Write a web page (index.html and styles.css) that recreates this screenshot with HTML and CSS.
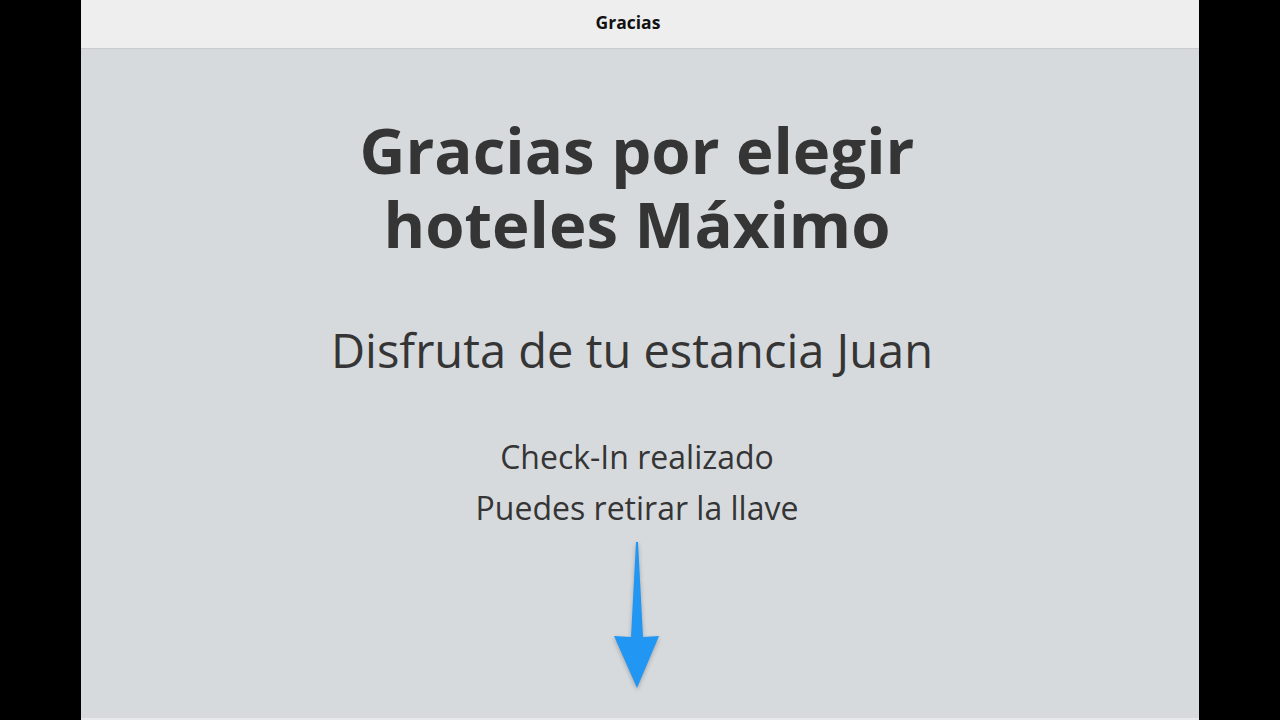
FILE: index.html
```html
<!DOCTYPE html>
<html lang="es">
<head>
<meta charset="utf-8">
<title>Gracias</title>
<link rel="stylesheet" href="styles.css">
</head>
<body>
<div class="screen">
  <header class="topbar">Gracias</header>
  <main class="content">
    <h1 class="title"><span class="title-line">Gracias por elegir</span><span class="title-line">hoteles Máximo</span></h1>
    <p class="subtitle">Disfruta de tu estancia Juan</p>
    <div class="status">
      <p>Check-In realizado</p>
      <p>Puedes retirar la llave</p>
    </div>
    <svg class="arrow" width="48" height="152" viewBox="0 0 48 152" aria-hidden="true">
      <polygon points="23,4 25,4 30,99 46,98 24,150 1,98 18,99" fill="#2196f3"/>
    </svg>
  </main>
</div>
</body>
</html>
```

FILE: styles.css
```css
html, body {
  margin: 0;
  padding: 0;
  background: #000;
  height: 100%;
}
body {
  font-family: "Open Sans", "Noto Sans", sans-serif;
  color: #353535;
}
.screen {
  width: 1118px;
  height: 720px;
  margin: 0 auto;
  display: flex;
  flex-direction: column;
  background: #d7dadd;
  overflow: hidden;
}
.topbar {
  height: 49px;
  box-sizing: border-box;
  flex: none;
  background: #eeeeee;
  border-bottom: 1px solid #c9cbcd;
  display: flex;
  align-items: center;
  justify-content: center;
  padding-right: 24px;
  padding-bottom: 4px;
  font-weight: 700;
  font-size: 17.5px;
  color: #111;
}
.content {
  flex: 1;
  display: flex;
  flex-direction: column;
  align-items: center;
  padding-top: 64px;
  padding-right: 6px;
  border-bottom: 2px solid #e6e8ea;
}
.title {
  margin: 0;
  font-size: 63.5px;
  line-height: 74px;
  font-weight: 700;
  text-align: center;
  display: flex;
  flex-direction: column;
  align-items: center;
}
.title-line {
  display: block;
  height: 74px;
}
.subtitle {
  margin: 59px 10px 0 0;
  font-size: 47px;
  line-height: 60px;
}
.status {
  margin-top: 51px;
  text-align: center;
  font-size: 32px;
  line-height: 51px;
}
.status p {
  margin: 0;
}
.arrow {
  margin-top: 5px;
  filter: drop-shadow(0 2px 2px rgba(0,0,0,0.25));
}
```
